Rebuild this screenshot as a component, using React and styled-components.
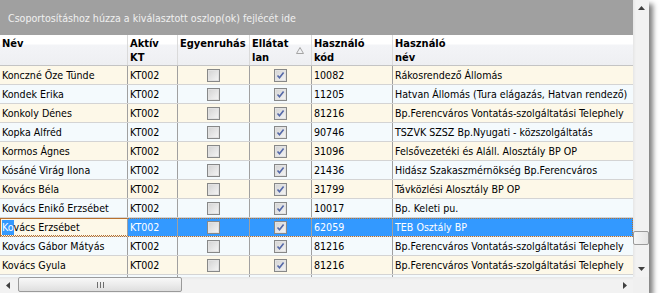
import React from "react";
import styled, { createGlobalStyle } from "styled-components";

const GlobalStyle = createGlobalStyle`
  html, body { margin: 0; padding: 0; background: #ffffff; }
  body {
    font-family: "DejaVu Sans Condensed", "DejaVu Sans", sans-serif;
    font-size: 10.6px;
    color: #000;
  }
`;

const COLS = "128px 50px 72px 62px 81px 240px";

const columns = [
  { key: "name", lines: ["Név"] },
  { key: "kt", lines: ["Aktív", "KT"] },
  { key: "uniform", lines: ["Egyenruhás"] },
  { key: "supplied", lines: ["Ellátat", "lan"], sorted: true },
  { key: "code", lines: ["Használó", "kód"] },
  { key: "place", lines: ["Használó", "név"], last: true },
];

const rows = [
  ["Konczné Őze Tünde", "10082", "Rákosrendező Állomás"],
  ["Kondek Erika", "11205", "Hatvan Állomás (Tura elágazás, Hatvan rendező)"],
  ["Konkoly Dénes", "81216", "Bp.Ferencváros Vontatás-szolgáltatási Telephely"],
  ["Kopka Alfréd", "90746", "TSZVK SZSZ Bp.Nyugati - közszolgáltatás"],
  ["Kormos Ágnes", "31096", "Felsővezetéki és Aláll. Alosztály BP OP"],
  ["Kósáné Virág Ilona", "21436", "Hidász Szakaszmérnökség Bp.Ferencváros"],
  ["Kovács Béla", "31799", "Távközlési Alosztály BP OP"],
  ["Kovács Enikő Erzsébet", "10017", "Bp. Keleti pu."],
  ["Kovács Erzsébet", "62059", "TEB Osztály BP"],
  ["Kovács Gábor Mátyás", "81216", "Bp.Ferencváros Vontatás-szolgáltatási Telephely"],
  ["Kovács Gyula", "81216", "Bp.Ferencváros Vontatás-szolgáltatási Telephely"],
];

const SELECTED = 8;

const Window = styled.div`
  display: grid;
  grid-template-columns: 633px 16px;
  grid-template-rows: 277px 16px;
  width: 649px;
  height: 293px;
  box-shadow: 4px 4px 5px rgba(0, 0, 0, 0.5);
`;

const Main = styled.div`
  display: flex;
  flex-direction: column;
  overflow: hidden;
  background: #ffffff;
`;

const GroupPanel = styled.div`
  height: 35px;
  flex: none;
  display: flex;
  align-items: center;
  padding-left: 8px;
  background: #a0a0a0;
  color: #f0f0f0;
`;

const Header = styled.div`
  display: grid;
  grid-template-columns: ${COLS};
  height: 30px;
  flex: none;
  border-bottom: 1px solid #c4c4c4;
  background: linear-gradient(to bottom, #ffffff 0, #ffffff 9px, #f3f4f7 10px, #eeeff2 100%);
`;

const HeaderCell = styled.div`
  display: flex;
  align-items: center;
  padding: 0 3px 0 2px;
  border-right: ${(p) => (p.$last ? "none" : "1px solid #dadada")};
  font-weight: bold;
  font-size: 11px;
  line-height: 14px;
  overflow: hidden;
`;

const HeaderText = styled.div`
  align-self: flex-start;
  padding-top: 2px;
  white-space: nowrap;
`;

const SortGlyph = styled.svg`
  margin-left: auto;
  margin-right: 4px;
  flex: none;
`;

const Body = styled.div`
  flex: 1;
  overflow: hidden;
`;

const Row = styled.div`
  display: grid;
  grid-template-columns: ${COLS};
  height: 18px;
  border-bottom: 1px solid #d4d4d4;
  background: ${(p) => (p.$selected ? "#3399ff" : p.$odd ? "#f4fafd" : "#fdf8e8")};
  color: ${(p) => (p.$selected ? "#ffffff" : "#000000")};
  outline: ${(p) => (p.$selected ? "1px dotted #b8702e" : "none")};
  outline-offset: -1px;
`;

const Cell = styled.div`
  display: flex;
  align-items: center;
  justify-content: ${(p) => (p.$center ? "center" : "flex-start")};
  padding: 0 2px;
  border-right: ${(p) => (p.$last ? "none" : "1px solid #a0a0a0")};
  white-space: nowrap;
  overflow: hidden;
`;

const EditCell = styled(Cell)`
  background: #fdf8e8;
  color: #000000;
  border-top: 1px dotted #b8702e;
  border-bottom: 1px dotted #b8702e;
  border-left: 1px dotted #b8702e;
  padding-left: 1px;
`;

const Marked = styled.span`
  background: #3399ff;
  color: #ffffff;
  line-height: 15px;
`;

const Box = styled.span`
  box-sizing: border-box;
  width: 13px;
  height: 13px;
  border: 1px solid #878888;
  background: linear-gradient(135deg, #d2d2d2 0%, #e6e6e6 55%, #f6f6f6 100%);
  box-shadow: inset 0 0 0 1px #e2e2e2;
  display: flex;
  align-items: center;
  justify-content: center;
`;

function CheckBox({ checked }) {
  return (
    <Box>
      {checked && (
        <svg width="9" height="9" viewBox="0 0 9 9">
          <path d="M1.5 4.5 L3.5 6.8 L7.6 1.6" fill="none" stroke="#5569a8" strokeWidth="1.6" />
        </svg>
      )}
    </Box>
  );
}

const VScroll = styled.div`
  display: flex;
  flex-direction: column;
  background: linear-gradient(to right, #e6e6e6 0, #f2f2f2 3px, #f2f2f2 100%);
`;

const HScroll = styled.div`
  display: flex;
  align-items: stretch;
  background: linear-gradient(to bottom, #e6e6e6 0, #f2f2f2 3px, #f2f2f2 100%);
`;

const Corner = styled.div`
  background: #f0f0f0;
`;

const ArrowButton = styled.div`
  flex: none;
  width: 16px;
  height: 16px;
  display: flex;
  align-items: center;
  justify-content: center;
`;

const Track = styled.div`
  flex: 1;
  display: flex;
  flex-direction: ${(p) => (p.$vertical ? "column" : "row")};
`;

const Thumb = styled.div`
  box-sizing: border-box;
  flex: none;
  border: 1px solid #9a9a9a;
  border-radius: 2px;
  background: ${(p) =>
    p.$vertical
      ? "linear-gradient(to right, #f6f6f6, #e4e4e4)"
      : "linear-gradient(to bottom, #f8f8f8 0%, #ececec 50%, #dedede 100%)"};
  display: flex;
  align-items: center;
  justify-content: center;
  gap: 2px;
`;

const Grip = styled.span`
  width: 1px;
  height: 6px;
  background: #6e6e6e;
`;

function Arrow({ dir }) {
  const pts = {
    up: "0,4 3.5,0 7,4",
    down: "0,0 7,0 3.5,4",
    left: "4,0 4,7 0,3.5",
    right: "0,0 4,3.5 0,7",
  }[dir];
  const vertical = dir === "up" || dir === "down";
  return (
    <svg width={vertical ? 7 : 4} height={vertical ? 4 : 7}>
      <polygon points={pts} fill="#404040" />
    </svg>
  );
}

export default function App() {
  return (
    <>
      <GlobalStyle />
      <Window>
        <Main>
          <GroupPanel>Csoportosításhoz húzza a kiválasztott oszlop(ok) fejlécét ide</GroupPanel>
          <Header>
            {columns.map((c) => (
              <HeaderCell key={c.key} $last={c.last}>
                <HeaderText>
                  {c.lines.map((l) => (
                    <div key={l}>{l}</div>
                  ))}
                </HeaderText>
                {c.sorted && (
                  <SortGlyph width="8" height="7" viewBox="0 0 8 7">
                    <polygon points="4,0.5 7.5,6.5 0.5,6.5" fill="none" stroke="#a4a4a4" strokeWidth="1" />
                  </SortGlyph>
                )}
              </HeaderCell>
            ))}
          </Header>
          <Body>
            {rows.map(([name, code, place], i) => {
              const selected = i === SELECTED;
              return (
                <Row key={name} $odd={i % 2 === 1} $selected={selected}>
                  {selected ? (
                    <EditCell>
                      <Marked>Ko</Marked>
                      {name.slice(2)}
                    </EditCell>
                  ) : (
                    <Cell>{name}</Cell>
                  )}
                  <Cell>KT002</Cell>
                  <Cell $center>
                    <CheckBox />
                  </Cell>
                  <Cell $center>
                    <CheckBox checked />
                  </Cell>
                  <Cell>{code}</Cell>
                  <Cell $last>{place}</Cell>
                </Row>
              );
            })}
            <Row $odd>
              {columns.map((c) => (
                <Cell key={c.key} $last={c.last} />
              ))}
            </Row>
          </Body>
        </Main>
        <VScroll>
          <ArrowButton>
            <Arrow dir="up" />
          </ArrowButton>
          <Track $vertical>
            <Thumb $vertical style={{ marginTop: 215, height: 14, width: 16 }} />
          </Track>
          <ArrowButton>
            <Arrow dir="down" />
          </ArrowButton>
        </VScroll>
        <HScroll>
          <ArrowButton>
            <Arrow dir="left" />
          </ArrowButton>
          <Track>
            <Thumb style={{ marginLeft: 2, width: 164, height: 15 }}>
              <Grip />
              <Grip />
              <Grip />
            </Thumb>
          </Track>
          <ArrowButton>
            <Arrow dir="right" />
          </ArrowButton>
        </HScroll>
        <Corner />
      </Window>
    </>
  );
}
